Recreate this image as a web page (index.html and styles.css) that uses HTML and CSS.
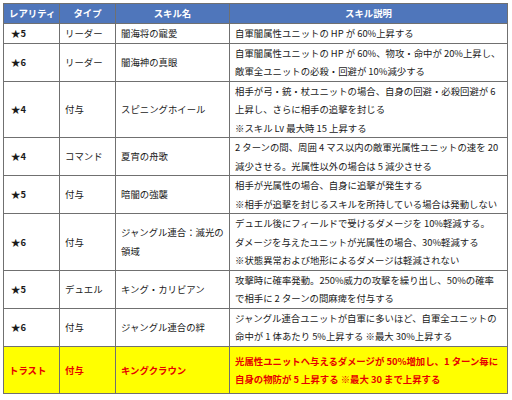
FILE: index.html
```html
<!DOCTYPE html>
<html lang="ja">
<head>
<meta charset="utf-8">
<link rel="stylesheet" href="styles.css">
</head>
<body>
<table class="skills">
  <colgroup>
    <col class="c-rarity">
    <col class="c-type">
    <col class="c-name">
    <col class="c-desc">
  </colgroup>
  <thead>
    <tr>
      <th>レアリティ</th>
      <th>タイプ</th>
      <th>スキル名</th>
      <th>スキル説明</th>
    </tr>
  </thead>
  <tbody>
    <tr>
      <td class="rar">★5</td>
      <td>リーダー</td>
      <td>闇海将の寵愛</td>
      <td>自軍闇属性ユニットの HP が 60%上昇する</td>
    </tr>
    <tr>
      <td class="rar">★6</td>
      <td>リーダー</td>
      <td>闇海神の真眼</td>
      <td>自軍闇属性ユニットの HP が 60%、物攻・命中が 20%上昇し、<br>敵軍全ユニットの必殺・回避が 10%減少する</td>
    </tr>
    <tr>
      <td class="rar">★4</td>
      <td>付与</td>
      <td>スピニングホイール</td>
      <td>相手が弓・銃・杖ユニットの場合、自身の回避・必殺回避が 6<br>上昇し、さらに相手の追撃を封じる<br>※スキル Lv 最大時 15 上昇する</td>
    </tr>
    <tr>
      <td class="rar">★4</td>
      <td>コマンド</td>
      <td>夏宵の舟歌</td>
      <td>2 ターンの間、周囲 4 マス以内の敵軍光属性ユニットの速を 20<br>減少させる。光属性以外の場合は 5 減少させる</td>
    </tr>
    <tr>
      <td class="rar">★5</td>
      <td>付与</td>
      <td>暗闇の強襲</td>
      <td>相手が光属性の場合、自身に追撃が発生する<br>※相手が追撃を封じるスキルを所持している場合は発動しない</td>
    </tr>
    <tr>
      <td class="rar">★6</td>
      <td>付与</td>
      <td>ジャングル連合：滅光の<br>領域</td>
      <td>デュエル後にフィールドで受けるダメージを 10%軽減する。<br>ダメージを与えたユニットが光属性の場合、30%軽減する<br>※状態異常および地形によるダメージは軽減されない</td>
    </tr>
    <tr>
      <td class="rar">★5</td>
      <td>デュエル</td>
      <td>キング・カリビアン</td>
      <td>攻撃時に確率発動。250%威力の攻撃を繰り出し、50%の確率<br>で相手に 2 ターンの間麻痺を付与する</td>
    </tr>
    <tr>
      <td class="rar">★6</td>
      <td>付与</td>
      <td>ジャングル連合の絆</td>
      <td>ジャングル連合ユニットが自軍に多いほど、自軍全ユニットの<br>命中が 1 体あたり 5%上昇する ※最大 30%上昇する</td>
    </tr>
    <tr class="trust">
      <td>トラスト</td>
      <td>付与</td>
      <td>キングクラウン</td>
      <td>光属性ユニットへ与えるダメージが 50%増加し、1 ターン毎に<br>自身の物防が 5 上昇する ※最大 30 まで上昇する</td>
    </tr>
  </tbody>
</table>
</body>
</html>
```

FILE: styles.css
```css
html, body {
  margin: 0;
  padding: 0;
  background: #ffffff;
}

body {
  padding: 3px;
  font-family: "Noto Sans CJK JP", "Noto Sans", sans-serif;
  color: #1a1a1a;
}

.skills {
  border-collapse: collapse;
  table-layout: fixed;
  width: 504px;
  font-size: 9.4px;
}

.c-rarity { width: 56px; }
.c-type { width: 56px; }
.c-name { width: 114px; }
.c-desc { width: 278px; }

.skills th,
.skills td {
  border: 1px solid #707070;
  padding: 0 5px;
  vertical-align: middle;
  line-height: 18.5px;
  text-align: left;
  white-space: nowrap;
  overflow: hidden;
}

.skills th {
  background: #4f76bb;
  color: #ffffff;
  font-weight: bold;
  text-align: center;
  line-height: 19px;
}

.skills td.rar {
  font-weight: bold;
  padding-left: 7px;
}

.skills tr.trust td {
  background: #ffff00;
  color: #e60000;
  font-weight: bold;
  padding-top: 5px;
  padding-bottom: 5px;
  line-height: 18px;
}
```
